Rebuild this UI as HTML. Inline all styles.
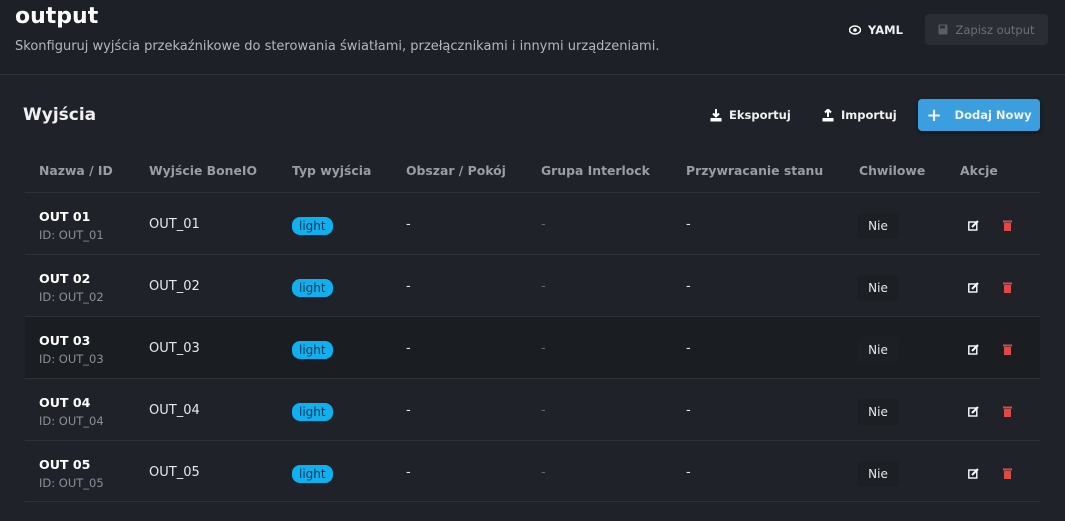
<!DOCTYPE html>
<html><head><meta charset="utf-8"><style>
*{box-sizing:border-box;margin:0;padding:0}
body{width:1065px;height:521px;overflow:hidden;background:#1d2026;font-family:"DejaVu Sans","Liberation Sans",sans-serif;color:#e8e9eb;position:relative}
.abs{position:absolute;white-space:nowrap}
.title{left:15px;top:4px;font-size:22px;font-weight:bold;color:#fff}
.sub{left:15px;top:39px;font-size:13px;color:#b4b7bc}
.div{left:0;top:74px;width:1065px;height:1px;background:#30333a}
.card{left:0;top:75px;width:1065px;height:446px;background:#1f2229}
.h2{left:23px;top:105px;font-size:17px;font-weight:600;color:#f0f0f0}
.btn{font-size:11.5px;font-weight:bold;color:#f0f0f0;display:flex;align-items:center;gap:7px}
.blue{left:918px;top:99px;width:122px;height:32px;background:#3b9ede;border-radius:4px;justify-content:center;box-shadow:0 2px 4px rgba(0,0,0,.4)}
.save{left:925px;top:14px;width:123px;height:31px;background:#2a2d33;border-radius:4px;justify-content:center;color:#6d7075;font-weight:normal}
.th{top:163px;font-size:12.4px;font-weight:bold;color:#9a9da3}
.row{position:absolute;left:25px;width:1015px;height:62px;border-top:1px solid #2d3037}
.row.dark{background:#1a1d21}
.c{position:absolute;font-size:13px;white-space:nowrap}
.name{left:14px;top:16px;font-weight:bold;font-size:12.6px;color:#fff}
.id{left:14px;top:35px;font-size:11.5px;color:#8c9096}
.tag{left:267px;top:24px;background:#0fb0f0;color:#0a3550;border-radius:8px;font-size:12px;padding:1px 7px;line-height:16px}
.nie{left:832px;top:20px;width:42px;height:26px;line-height:26px;text-align:center;font-size:12px;background:#1c1f24;border-radius:4px}
.v{top:24px}
</style></head><body>
<div class="abs title">output</div>
<div class="abs sub">Skonfiguruj wyjścia przekaźnikowe do sterowania światłami, przełącznikami i innymi urządzeniami.</div>
<div class="abs btn" style="left:849px;top:23px"><svg width="12" height="10" viewBox="0 0 12 10"><ellipse cx="6" cy="5" rx="5.5" ry="4" fill="none" stroke="#fff" stroke-width="1.5"/><circle cx="6" cy="5" r="1.8" fill="#fff"/></svg>YAML</div>
<div class="abs btn save"><svg width="10" height="11" viewBox="0 0 10 11"><rect x="0.5" y="0.5" width="9" height="10" rx="1" fill="#5a5d62"/><rect x="2" y="1.5" width="5" height="3" fill="#2a2d33"/></svg>Zapisz output</div>
<div class="abs div"></div>
<div class="abs card"></div>
<div class="abs h2">Wyjścia</div>
<div class="abs btn" style="left:710px;top:108px"><svg width="12" height="13" viewBox="0 0 12 13"><path d="M6 0v7M3 4.5l3 3 3-3" stroke="#fff" stroke-width="2" fill="none"/><rect x="0.5" y="9" width="11" height="3.5" fill="#fff"/></svg>Eksportuj</div>
<div class="abs btn" style="left:822px;top:108px"><svg width="12" height="13" viewBox="0 0 12 13"><path d="M6 8V1M3 3.5l3-3 3 3" stroke="#fff" stroke-width="2" fill="none"/><rect x="0.5" y="9" width="11" height="3.5" fill="#fff"/></svg>Importuj</div>
<div class="abs btn blue"><span style="font-size:18px;font-weight:bold;margin-right:6px">+</span>Dodaj Nowy</div>
<div class="abs th" style="left:39px">Nazwa / ID</div>
<div class="abs th" style="left:149px">Wyjście BoneIO</div>
<div class="abs th" style="left:292px">Typ wyjścia</div>
<div class="abs th" style="left:406px">Obszar / Pokój</div>
<div class="abs th" style="left:541px">Grupa Interlock</div>
<div class="abs th" style="left:686px">Przywracanie stanu</div>
<div class="abs th" style="left:859px">Chwilowe</div>
<div class="abs th" style="left:960px">Akcje</div>
<div class="row" style="top:192px"><div class="c name">OUT 01</div><div class="c id">ID: OUT_01</div><div class="c v" style="left:124px">OUT_01</div><div class="c tag">light</div><div class="c v" style="left:381px">-</div><div class="c v" style="left:516px;color:#666">-</div><div class="c v" style="left:661px">-</div><div class="c nie">Nie</div><svg class="c" style="left:943px;top:27px" width="12" height="11" viewBox="0 0 12 11"><rect x="0.8" y="2" width="8" height="8" fill="none" stroke="#fff" stroke-width="1.4"/><path d="M4 7l6-6" stroke="#fff" stroke-width="2"/></svg><svg class="c" style="left:978px;top:27px" width="9" height="11" viewBox="0 0 9 11"><rect x="0" y="0.5" width="9" height="2" fill="#e04848"/><rect x="1" y="3" width="7" height="8" fill="#e04848"/></svg></div>
<div class="row" style="top:254px"><div class="c name">OUT 02</div><div class="c id">ID: OUT_02</div><div class="c v" style="left:124px">OUT_02</div><div class="c tag">light</div><div class="c v" style="left:381px">-</div><div class="c v" style="left:516px;color:#666">-</div><div class="c v" style="left:661px">-</div><div class="c nie">Nie</div><svg class="c" style="left:943px;top:27px" width="12" height="11" viewBox="0 0 12 11"><rect x="0.8" y="2" width="8" height="8" fill="none" stroke="#fff" stroke-width="1.4"/><path d="M4 7l6-6" stroke="#fff" stroke-width="2"/></svg><svg class="c" style="left:978px;top:27px" width="9" height="11" viewBox="0 0 9 11"><rect x="0" y="0.5" width="9" height="2" fill="#e04848"/><rect x="1" y="3" width="7" height="8" fill="#e04848"/></svg></div>
<div class="row dark" style="top:316px"><div class="c name">OUT 03</div><div class="c id">ID: OUT_03</div><div class="c v" style="left:124px">OUT_03</div><div class="c tag">light</div><div class="c v" style="left:381px">-</div><div class="c v" style="left:516px;color:#666">-</div><div class="c v" style="left:661px">-</div><div class="c nie">Nie</div><svg class="c" style="left:943px;top:27px" width="12" height="11" viewBox="0 0 12 11"><rect x="0.8" y="2" width="8" height="8" fill="none" stroke="#fff" stroke-width="1.4"/><path d="M4 7l6-6" stroke="#fff" stroke-width="2"/></svg><svg class="c" style="left:978px;top:27px" width="9" height="11" viewBox="0 0 9 11"><rect x="0" y="0.5" width="9" height="2" fill="#e04848"/><rect x="1" y="3" width="7" height="8" fill="#e04848"/></svg></div>
<div class="row" style="top:378px"><div class="c name">OUT 04</div><div class="c id">ID: OUT_04</div><div class="c v" style="left:124px">OUT_04</div><div class="c tag">light</div><div class="c v" style="left:381px">-</div><div class="c v" style="left:516px;color:#666">-</div><div class="c v" style="left:661px">-</div><div class="c nie">Nie</div><svg class="c" style="left:943px;top:27px" width="12" height="11" viewBox="0 0 12 11"><rect x="0.8" y="2" width="8" height="8" fill="none" stroke="#fff" stroke-width="1.4"/><path d="M4 7l6-6" stroke="#fff" stroke-width="2"/></svg><svg class="c" style="left:978px;top:27px" width="9" height="11" viewBox="0 0 9 11"><rect x="0" y="0.5" width="9" height="2" fill="#e04848"/><rect x="1" y="3" width="7" height="8" fill="#e04848"/></svg></div>
<div class="row" style="top:440px;border-bottom:1px solid #2d3037"><div class="c name">OUT 05</div><div class="c id">ID: OUT_05</div><div class="c v" style="left:124px">OUT_05</div><div class="c tag">light</div><div class="c v" style="left:381px">-</div><div class="c v" style="left:516px;color:#666">-</div><div class="c v" style="left:661px">-</div><div class="c nie">Nie</div><svg class="c" style="left:943px;top:27px" width="12" height="11" viewBox="0 0 12 11"><rect x="0.8" y="2" width="8" height="8" fill="none" stroke="#fff" stroke-width="1.4"/><path d="M4 7l6-6" stroke="#fff" stroke-width="2"/></svg><svg class="c" style="left:978px;top:27px" width="9" height="11" viewBox="0 0 9 11"><rect x="0" y="0.5" width="9" height="2" fill="#e04848"/><rect x="1" y="3" width="7" height="8" fill="#e04848"/></svg></div>
</body></html>
